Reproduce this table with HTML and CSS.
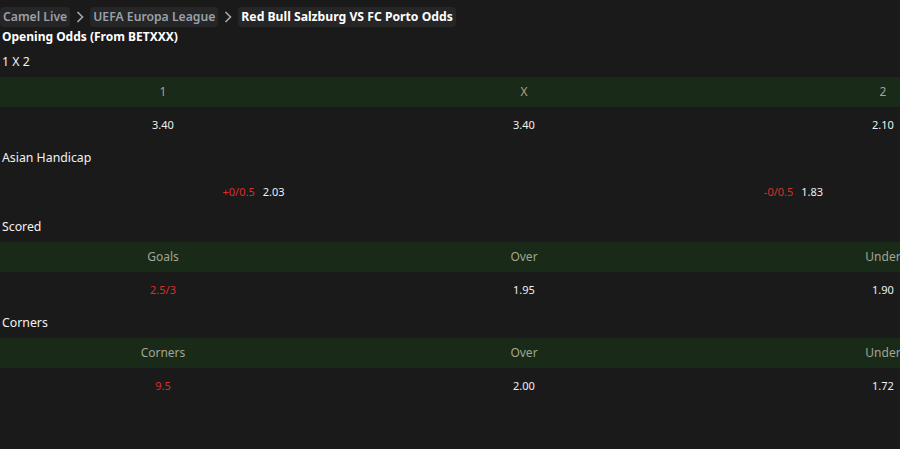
FILE: index.html
```html
<!DOCTYPE html>
<html lang="en">
<head>
<meta charset="utf-8">
<title>Red Bull Salzburg VS FC Porto Odds</title>
<link rel="stylesheet" href="styles.css">
</head>
<body>
<nav class="crumbs">
  <span class="pill">Camel Live</span>
  <svg class="chev" width="10" height="14" viewBox="0 0 10 14"><path d="M2.5 2 L7.5 7 L2.5 12" fill="none" stroke="#a8a8a8" stroke-width="1.6"/></svg>
  <span class="pill">UEFA Europa League</span>
  <svg class="chev" width="10" height="14" viewBox="0 0 10 14"><path d="M2.5 2 L7.5 7 L2.5 12" fill="none" stroke="#a8a8a8" stroke-width="1.6"/></svg>
  <span class="pill current">Red Bull Salzburg VS FC Porto Odds</span>
</nav>
<h1 class="page-title">Opening Odds (From BETXXX)</h1>

<section class="market">
  <h2 class="market-title">1 X 2</h2>
  <div class="row head three"><span>1</span><span>X</span><span>2</span></div>
  <div class="row vals three"><span>3.40</span><span>3.40</span><span>2.10</span></div>
</section>

<section class="market">
  <h2 class="market-title">Asian Handicap</h2>
  <div class="row vals two tall">
    <span><em class="line">+0/0.5</em><b class="odd">2.03</b></span>
    <span><em class="line">-0/0.5</em><b class="odd">1.83</b></span>
  </div>
</section>

<section class="market">
  <h2 class="market-title">Scored</h2>
  <div class="row head three"><span>Goals</span><span>Over</span><span>Under</span></div>
  <div class="row vals three"><span class="red">2.5/3</span><span>1.95</span><span>1.90</span></div>
</section>

<section class="market">
  <h2 class="market-title">Corners</h2>
  <div class="row head three"><span>Corners</span><span>Over</span><span>Under</span></div>
  <div class="row vals three"><span class="red">9.5</span><span>2.00</span><span>1.72</span></div>
</section>
</body>
</html>
```
FILE: styles.css
```css
html, body {
  margin: 0;
  padding: 0;
  overflow: hidden;
  background: #1a1a1a;
  color: #eeeeee;
  font-family: "Noto Sans", "Open Sans", sans-serif;
}
.crumbs {
  display: flex;
  align-items: center;
  padding-top: 7px;
  gap: 5px;
  height: 20px;
}
.pill {
  background: #262626;
  border-radius: 4px;
  height: 20px;
  line-height: 20px;
  padding: 0 3px;
  font-size: 12.2px;
  font-weight: 600;
  color: #98a1ac;
}
.pill.current {
  color: #ffffff;
  font-weight: 700;
}
.chev { display: block; }
.page-title {
  margin: 0;
  padding-left: 2px;
  height: 20px;
  line-height: 20px;
  font-size: 12px;
  font-weight: 700;
  color: #ffffff;
}
.market { overflow: hidden; }
.market-title {
  margin: 0;
  padding-left: 2px;
  height: 30px;
  line-height: 30px;
  font-size: 12.3px;
  font-weight: 400;
  color: #f2f2f2;
}
.row {
  display: grid;
  width: 1044px;
  text-align: center;
}
.row.three { grid-template-columns: 326px 396px 322px; }
.row.two { grid-template-columns: 507px 573px; }
.head {
  height: 30px;
  line-height: 30px;
  background: #1a2a18;
  font-size: 12px;
  color: #a3a592;
}
.vals {
  height: 36px;
  line-height: 36px;
  font-size: 11px;
  color: #f0f0f0;
}
.vals.tall { height: 39px; line-height: 38px; }
.red, .line { color: #d7302c; }
.line { font-style: normal; margin-right: 8px; }
.odd { font-weight: 400; color: #f0f0f0; }
```
